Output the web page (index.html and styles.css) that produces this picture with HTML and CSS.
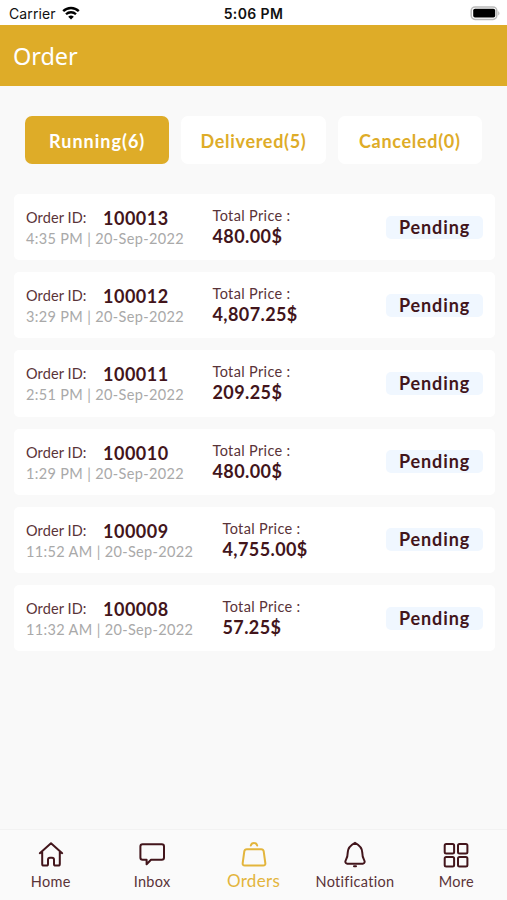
FILE: index.html
```
<!DOCTYPE html>
<html lang="en">
<head>
    <meta charset="UTF-8">
    <title>Order</title>
    <link rel="stylesheet" href="styles.css">
</head>
<body>
<div class="status-bar">
    <div class="carrier">
        <span>Carrier</span>
        <svg class="wifi" width="18" height="14" viewBox="0 0 18 14">
            <path d="M1.2 5.2a11 11 0 0 1 15.6 0" fill="none" stroke="#000" stroke-width="2.4"/>
            <path d="M4 8.3a7.1 7.1 0 0 1 10 0" fill="none" stroke="#000" stroke-width="2.3"/>
            <path d="M9 13.6L6.2 10.8a4 4 0 0 1 5.6 0z"/>
        </svg>
    </div>
    <span class="time">5:06 PM</span>
    <div class="battery">
        <svg width="31" height="15" viewBox="0 0 31 15">
            <rect x="1.2" y="1" width="25.6" height="12.4" rx="3.8" fill="#fff" stroke="#bbb" stroke-width="1.5"/>
            <rect x="3.2" y="2.8" width="22" height="8.8" rx="1.8"/>
            <path d="M28.4 5q2 2.3 0 4.6z" fill="#a8a8a8"/>
        </svg>
    </div>
</div>

<div class="header">Order</div>

<div class="tabs">
    <div class="tab active">Running(6)</div>
    <div class="tab">Delivered(5)</div>
    <div class="tab">Canceled(0)</div>
</div>

<div class="list">
    <div class="card">
        <div class="order">
            <p class="id"><span>Order ID:</span><b>100013</b></p>
            <p class="date">4:35 PM | 20-Sep-2022</p>
        </div>
        <div class="price">
            <p class="label">Total Price :</p>
            <p class="num">480.00$</p>
        </div>
        <div class="state">Pending</div>
    </div>
    <div class="card">
        <div class="order">
            <p class="id"><span>Order ID:</span><b>100012</b></p>
            <p class="date">3:29 PM | 20-Sep-2022</p>
        </div>
        <div class="price">
            <p class="label">Total Price :</p>
            <p class="num">4,807.25$</p>
        </div>
        <div class="state">Pending</div>
    </div>
    <div class="card">
        <div class="order">
            <p class="id"><span>Order ID:</span><b>100011</b></p>
            <p class="date">2:51 PM | 20-Sep-2022</p>
        </div>
        <div class="price">
            <p class="label">Total Price :</p>
            <p class="num">209.25$</p>
        </div>
        <div class="state">Pending</div>
    </div>
    <div class="card">
        <div class="order">
            <p class="id"><span>Order ID:</span><b>100010</b></p>
            <p class="date">1:29 PM | 20-Sep-2022</p>
        </div>
        <div class="price">
            <p class="label">Total Price :</p>
            <p class="num">480.00$</p>
        </div>
        <div class="state">Pending</div>
    </div>
    <div class="card">
        <div class="order wide">
            <p class="id"><span>Order ID:</span><b>100009</b></p>
            <p class="date">11:52 AM | 20-Sep-2022</p>
        </div>
        <div class="price">
            <p class="label">Total Price :</p>
            <p class="num">4,755.00$</p>
        </div>
        <div class="state">Pending</div>
    </div>
    <div class="card">
        <div class="order wide">
            <p class="id"><span>Order ID:</span><b>100008</b></p>
            <p class="date">11:32 AM | 20-Sep-2022</p>
        </div>
        <div class="price">
            <p class="label">Total Price :</p>
            <p class="num">57.25$</p>
        </div>
        <div class="state">Pending</div>
    </div>
</div>

<div class="nav">
    <div class="item">
        <svg width="28" height="28" viewBox="0 0 28 28">
            <path d="M2.8 13.2L14 3.3l11.2 9.9M5.2 11.5V24q0 1.6 1.6 1.6h2.6q1.6 0 1.6-1.6v-4.2q0-2 2-2h2q2 0 2 2V24q0 1.6 1.6 1.6h2.6q1.6 0 1.6-1.6V11.5"/>
        </svg>
        <span>Home</span>
    </div>
    <div class="item">
        <svg width="28" height="28" viewBox="0 0 28 28">
            <path d="M4.6 4.2h19.2q2.2 0 2.2 2.2v11.2q0 2.2-2.2 2.2H13l-4.4 4.4v-4.4h-4q-2.2 0-2.2-2.2V6.4q0-2.2 2.2-2.2z"/>
        </svg>
        <span>Inbox</span>
    </div>
    <div class="item active">
        <svg width="28" height="28" viewBox="0 0 28 28">
            <path d="M6.8 9.2h14.4q2.1 0 2.5 2.1l1.6 11.7q.4 2.6-2.2 2.6H4.9q-2.6 0-2.2-2.6l1.6-11.7q.4-2.1 2.5-2.1zM10.8 5.6q.6-2.6 3.2-2.6t3.2 2.6"/>
        </svg>
        <span>Orders</span>
    </div>
    <div class="item">
        <svg width="28" height="28" viewBox="0 0 28 28">
            <path d="M14 2.8C11 4.4 7 6.6 6.8 12c-.1 4.6-.5 6-2 8.2q-1.4 2.4 1.2 3.5h16q2.6-1.1 1.2-3.5c-1.5-2.2-1.9-3.6-2-8.2C21 6.600 17 4.400 14 2.800z"/>
            <path d="M13 26.300h2"/>
        </svg>
        <span>Notification</span>
    </div>
    <div class="item">
        <svg width="28" height="28" viewBox="0 0 28 28">
            <rect x="2.7" y="4" width="9.4" height="9.4" rx="1.5"/>
            <rect x="16" y="4" width="9.4" height="9.4" rx="1.5"/>
            <rect x="2.7" y="17" width="9.4" height="9.4" rx="1.5"/>
            <rect x="16" y="17" width="9.4" height="9.4" rx="1.5"/>
        </svg>
        <span>More</span>
    </div>
</div>
</body>
</html>
```
FILE: styles.css
```
html, body {
    height: 100%;
}

body {
    margin: 0;
    background: #f9f9f9;
    color: #42151b;
    font-family: Lato, sans-serif;
    display: flex;
    flex-direction: column;
    overflow: hidden;
}

p {
    margin: 0;
    white-space: nowrap;
}

.status-bar {
    height: 25px;
    background: #fff;
    color: #111;
    font-family: Inter, sans-serif;
    font-size: 14px;
    line-height: 27px;
    padding: 0 6px 0 9px;
    display: grid;
    grid-template-columns: 1fr auto 1fr;
}

.carrier {
    display: flex;
    gap: 6px;
    letter-spacing: 0.1px;
}

.wifi {
    margin-top: 6px;
}

.time {
    margin-left: -3px;
    font-weight: 600;
    letter-spacing: 0.4px;
}

.battery {
    display: flex;
    justify-content: flex-end;
    padding-top: 6px;
}

.header {
    height: 61px;
    background: #deac28;
    color: #fff;
    font-family: "Noto Sans", sans-serif;
    font-size: 23.5px;
    line-height: 63px;
    letter-spacing: -0.1px;
    padding-left: 13px;
}

.tabs {
    display: flex;
    gap: 12px;
    padding: 30px 25px 30px;
}

.tab {
    flex: 1;
    height: 48px;
    border-radius: 7px;
    background: #fff;
    color: #deac28;
    font-size: 18px;
    font-weight: bold;
    line-height: 50px;
    letter-spacing: 0.7px;
    text-align: center;
}

.tab.active {
    background: #deac28;
    color: #fff;
    letter-spacing: 1px;
}

.list {
    padding: 0 12px 0 14px;
    display: flex;
    flex-direction: column;
    gap: 12px;
}

.card {
    height: 66.2px;
    box-sizing: border-box;
    padding: 0 12px;
    border-radius: 5px;
    background: #fff;
    display: flex;
}

.order {
    width: 186.5px;
    padding-top: 12px;
}

.order.wide {
    width: 196.5px;
}

.id {
    height: 21px;
    display: flex;
    font-size: 14.5px;
    line-height: 24px;
}

.id span {
    width: 77px;
    color: #5a3338;
    letter-spacing: 0.1px;
}

.id b {
    font-size: 18px;
    letter-spacing: 0.5px;
}

.date {
    color: #a9a9a9;
    font-size: 14.5px;
    line-height: 24px;
    letter-spacing: 0.35px;
}

.price {
    flex: 1;
    padding-top: 10px;
}

.label {
    height: 20px;
    color: #5a3338;
    font-size: 14.5px;
    line-height: 24px;
    letter-spacing: 0.35px;
}

.num {
    font-size: 18px;
    font-weight: bold;
    line-height: 25px;
    letter-spacing: 0.4px;
}

.state {
    align-self: center;
    width: 97px;
    height: 23px;
    border-radius: 5px;
    background: #f0f7ff;
    font-size: 18px;
    font-weight: bold;
    line-height: 23px;
    letter-spacing: 0.9px;
    text-align: center;
}

.nav {
    height: 71px;
    box-sizing: border-box;
    margin-top: auto;
    padding-top: 10px;
    border-top: 1px solid #f2f2f2;
    background: #fafafa;
    display: flex;
}

.item {
    flex: 1;
    display: flex;
    flex-direction: column;
    align-items: center;
    color: #5a3338;
    font-size: 14.5px;
    line-height: 28px;
    letter-spacing: 0.3px;
}

.item svg {
    fill: none;
    stroke: #42151b;
    stroke-width: 2;
    stroke-linejoin: round;
    stroke-linecap: round;
}

.item.active {
    color: #e3b53c;
    font-size: 17px;
    line-height: 25px;
}

.item.active svg {
    stroke: #e3b53c;
}
```
